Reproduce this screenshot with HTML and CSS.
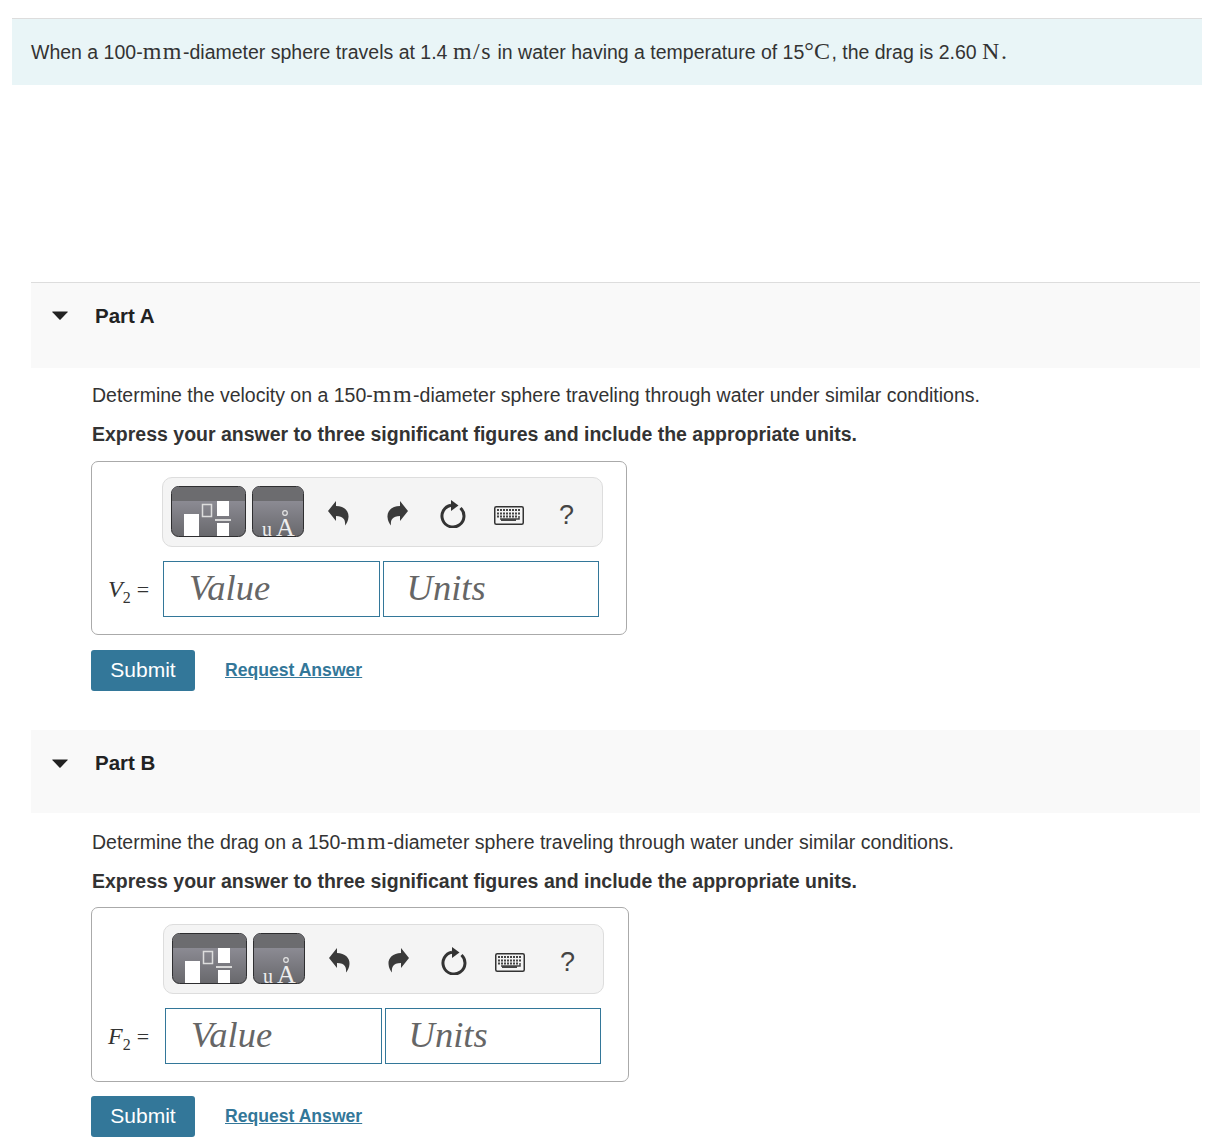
FILE: index.html
```html
<!DOCTYPE html>
<html>
<head>
<title>Drag on a sphere</title>
<meta http-equiv="Content-Type" content="text/html; charset=utf-8" />
<link rel="stylesheet" href="styles.css">
</head>
<body>
<!-- icons used by both answer boxes -->
<svg class="defs" width="0" height="0">
	<defs>
		<linearGradient id="btnGrad" x1="0" y1="0" x2="0" y2="1">
			<stop offset="0" stop-color="#9a99a3"/>
			<stop offset="1" stop-color="#68686c"/>
		</linearGradient>
		<symbol id="icoTemplates" viewBox="0 0 75 51">
			<rect x="0.5" y="0.5" width="74" height="50" rx="7" fill="url(#btnGrad)" stroke="#2e2e30"/>
			<path d="M1 15V7.500A6.500 6.500 0 0 1 7.500 1H67.500A6.500 6.500 0 0 1 74 7.500V15Z" fill="#6c6c6f"/>
			<rect x="13" y="28" width="15" height="22" fill="#fff"/>
			<rect x="31.500" y="18.500" width="9" height="12" fill="none" stroke="#ddd" stroke-width="1.500"/>
			<rect x="46" y="15" width="12" height="15" fill="#fff"/>
			<rect x="44" y="33" width="16" height="2" fill="#d8d8d8"/>
			<rect x="46" y="37" width="12" height="13" fill="#fff"/>
		</symbol>
		<symbol id="icoSymbols" viewBox="0 0 52 51">
			<rect x="0.5" y="0.5" width="51" height="50" rx="7" fill="url(#btnGrad)" stroke="#2e2e30"/>
			<path d="M1 15V7.500A6.500 6.500 0 0 1 7.500 1H44.500A6.500 6.500 0 0 1 51 7.500V15Z" fill="#6c6c6f"/>
			<text x="10" y="50" class="unit-glyph unit-small">u</text>
			<text x="24" y="50" class="unit-glyph">A</text>
			<circle cx="33" cy="27" r="2.300" fill="none" stroke="#e4e4e4" stroke-width="1.200"/>
		</symbol>
		<symbol id="icoUndo" viewBox="0 0 22 25">
			<path d="M0 10L8 0V5C16 5 21 10 20.500 16C20.300 20 18.500 22.500 17 24.500C17.500 20 16.500 15 8 15V20Z" fill="#3a3a3a"/>
		</symbol>
		<symbol id="icoReload" viewBox="0 0 28 28">
			<path d="M20.500 8A11 11 0 1 1 11 5.200" fill="none" stroke="#333" stroke-width="3"/>
			<path d="M11 0L18.500 5.500L11 11Z" fill="#333"/>
		</symbol>
		<symbol id="icoKeys" viewBox="0 0 30 19">
			<rect x="0.750" y="0.750" width="28.500" height="17.500" rx="1.500" fill="#f4f4f4" stroke="#333" stroke-width="1.500"/>
			<path d="M3 4H26M3 7.500H26M3 10.500H23" stroke="#444" stroke-width="2" stroke-dasharray="2 1" fill="none"/>
			<path d="M25 10V13H6" stroke="#444" stroke-width="1.500" fill="none"/>
			<rect x="7" y="13" width="15" height="2" fill="#444"/>
		</symbol>
		<symbol id="icoCaret" viewBox="0 0 16 9">
			<path d="M0.500 0.500H15.500Q16 0.500 15.500 1.200L8.600 8.400Q8 9 7.400 8.400L0.500 1.200Q0 0.500 0.500 0.500Z" fill="#222"/>
		</symbol>
	</defs>
</svg>

<div class="intro">When a 100-<span class="rm">mm</span>-diameter sphere travels at 1.4 <span class="rm">m/s</span> in water having a temperature of 15<span class="rm deg">°</span><span class="rm">C</span>, the drag is 2.60 <span class="rm">N</span><span class="rm">.</span></div>

<div class="part part-a">
	<div class="part-head">
		<svg class="caret"><use href="#icoCaret"/></svg>
		<span class="part-title">Part A</span>
	</div>
	<div class="part-body">
		<p class="question">Determine the velocity on a 150-<span class="rm">mm</span>-diameter sphere traveling through water under similar conditions.</p>
		<p class="instruct">Express your answer to three significant figures and include the appropriate units.</p>
		<div class="answer">
			<div class="toolbar">
				<svg class="tb-btn"><use href="#icoTemplates"/></svg>
				<svg class="tb-btn2"><use href="#icoSymbols"/></svg>
				<svg class="tb-undo"><use href="#icoUndo"/></svg>
				<svg class="tb-redo"><use href="#icoUndo"/></svg>
				<svg class="tb-reload"><use href="#icoReload"/></svg>
				<svg class="tb-keys"><use href="#icoKeys"/></svg>
				<span class="tb-help">?</span>
			</div>
			<div class="label"><i>V</i><sub>2</sub> <span class="eq">=</span></div>
			<div class="fields">
				<div class="field">Value</div>
				<div class="field">Units</div>
			</div>
		</div>
		<div class="actions">
			<div class="submit">Submit</div>
			<a class="request" href="#">Request Answer</a>
		</div>
	</div>
</div>

<div class="part part-b">
	<div class="part-head">
		<svg class="caret"><use href="#icoCaret"/></svg>
		<span class="part-title">Part B</span>
	</div>
	<div class="part-body">
		<p class="question">Determine the drag on a 150-<span class="rm">mm</span>-diameter sphere traveling through water under similar conditions.</p>
		<p class="instruct">Express your answer to three significant figures and include the appropriate units.</p>
		<div class="answer">
			<div class="toolbar">
				<svg class="tb-btn"><use href="#icoTemplates"/></svg>
				<svg class="tb-btn2"><use href="#icoSymbols"/></svg>
				<svg class="tb-undo"><use href="#icoUndo"/></svg>
				<svg class="tb-redo"><use href="#icoUndo"/></svg>
				<svg class="tb-reload"><use href="#icoReload"/></svg>
				<svg class="tb-keys"><use href="#icoKeys"/></svg>
				<span class="tb-help">?</span>
			</div>
			<div class="label"><i>F</i><sub>2</sub> <span class="eq">=</span></div>
			<div class="fields">
				<div class="field">Value</div>
				<div class="field">Units</div>
			</div>
		</div>
		<div class="actions">
			<div class="submit">Submit</div>
			<a class="request" href="#">Request Answer</a>
		</div>
	</div>
</div>
</body>
</html>
```
FILE: styles.css
```css
html, body {
	margin: 0;
	padding: 0;
	background: #fff;
}
body {
	font-family: "Liberation Sans", Arial, sans-serif;
	font-size: 19.5px;
	line-height: 24px;
	color: #333;
	padding-top: 18px;
	height: 1128px;
	overflow: hidden;
}
.defs {
	position: absolute;
}
.rm {
	font-family: "Liberation Serif", serif;
	font-size: 24px;
	letter-spacing: 1.5px;
}
.deg {
	letter-spacing: 0;
}
.intro {
	margin: 0 16px 0 12px;
	padding: 20px 19px 21px;
	background: #e9f5f7;
	border-top: 1px solid #ddd;
}
.part {
	margin: 0 18px 0 31px;
}
.part-a {
	margin-top: 197px;
}
.part-b {
	margin-top: 39px;
}
.part-head {
	display: flex;
	align-items: center;
	background: #f9f9f9;
	padding-left: 21px;
	font-size: 20.5px;
	font-weight: bold;
	color: #222;
}
.part-a .part-head {
	border-top: 1px solid #ddd;
	height: 65px;
	padding-bottom: 20px;
}
.part-b .part-head {
	height: 66px;
	padding-bottom: 17px;
}
.caret {
	width: 16px;
	height: 9px;
	margin-right: 27px;
}
.part-a .part-body {
	padding: 14px 0 0 60px;
}
.part-b .part-body {
	padding: 16px 0 0 60px;
}
.question {
	margin: 0 0 15px 1px;
}
.instruct {
	margin: 0 0 15px 1px;
	font-weight: bold;
}
.part-b .instruct {
	margin-bottom: 14px;
}
.answer {
	display: inline-grid;
	grid-template-columns: auto auto;
	row-gap: 14px;
	align-items: center;
	padding: 15px 23px 17px 16px;
	border: 1px solid #aaa;
	border-radius: 7px;
	box-sizing: border-box;
	vertical-align: top;
}
.part-b .answer {
	padding: 16px 24px 17px 16px;
}
.toolbar {
	grid-column: 2;
	display: flex;
	align-items: center;
	width: 441px;
	height: 70px;
	margin-left: -1px;
	padding-left: 8px;
	box-sizing: border-box;
	background: #f4f4f4;
	border: 1px solid #ddd;
	border-radius: 10px;
}
.part-b .toolbar {
	margin-left: -2px;
}
.tb-btn, .tb-btn2 {
	height: 51px;
	margin-bottom: 2px;
}
.tb-btn {
	width: 75px;
}
.tb-btn2 {
	width: 52px;
	margin-left: 6px;
}
.tb-undo, .tb-redo {
	width: 22px;
	height: 25px;
	margin-top: 2px;
}
.tb-undo {
	margin-left: 24px;
}
.tb-redo {
	margin-left: 36px;
	transform: scaleX(-1);
}
.tb-reload {
	width: 28px;
	height: 28px;
	margin-left: 32px;
	margin-top: 4px;
}
.tb-keys {
	width: 30px;
	height: 19px;
	margin-left: 26px;
	margin-top: 6px;
}
.tb-help {
	margin-left: 35px;
	margin-top: 6px;
	font-size: 27px;
	color: #444;
}
.unit-glyph {
	font-family: "Liberation Serif", serif;
	font-size: 26px;
	fill: #eee;
}
.unit-small {
	font-size: 20px;
}
.label {
	font-family: "Liberation Serif", serif;
	font-size: 24px;
	padding-right: 14px;
	white-space: nowrap;
}
.part-b .label {
	padding-right: 16px;
}
.label sub {
	font-size: 16px;
	line-height: 0;
}
.eq {
	font-size: 22px;
}
.fields {
	display: flex;
	gap: 3px;
}
.field {
	width: 216.5px;
	height: 56px;
	box-sizing: border-box;
	border: 1px solid #337799;
	padding-left: 25px;
	font-family: "Liberation Serif", serif;
	font-style: italic;
	font-size: 36.5px;
	line-height: 52px;
	color: #666;
}
.field + .field {
	padding-left: 23px;
}
.actions {
	display: flex;
	align-items: center;
	margin-top: 15px;
}
.part-b .actions {
	margin-top: 14px;
}
.submit {
	width: 104px;
	height: 41px;
	background: #337799;
	border-radius: 3px;
	color: #fff;
	font-size: 21px;
	line-height: 39px;
	text-align: center;
}
.request {
	margin-left: 30px;
	margin-bottom: 1px;
	color: #337799;
	font-size: 17.6px;
	font-weight: bold;
}
```
